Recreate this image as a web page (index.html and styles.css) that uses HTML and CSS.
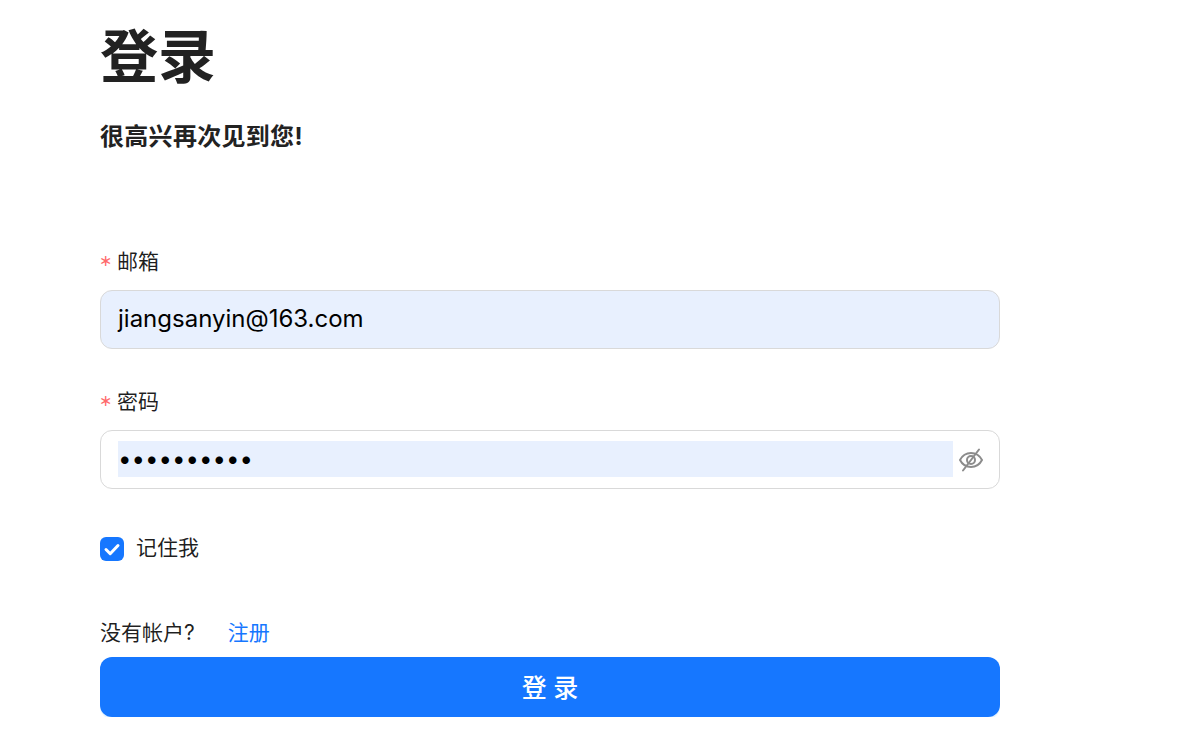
FILE: index.html
```html
<!DOCTYPE html>
<html lang="zh-CN">
<head>
<meta charset="utf-8">
<title>登录</title>
<link rel="stylesheet" href="styles.css">
</head>
<body>
<main class="page">
  <h1 class="title">登录</h1>
  <p class="subtitle">很高兴再次见到您!</p>
  <form class="form">
    <div class="field first">
      <label class="label"><span class="req">∗</span>邮箱</label>
      <div class="input filled"><span class="value">jiangsanyin@163.com</span></div>
    </div>
    <div class="field">
      <label class="label"><span class="req">∗</span>密码</label>
      <div class="input">
        <span class="pw">••••••••••</span>
        <svg class="eye" viewBox="0 0 24 24" width="24" height="24" fill="none" stroke="#8c8c8c" stroke-width="2" stroke-linecap="round" stroke-linejoin="round">
          <path d="M1 12C3.500 7.200 7.300 5 12 5s8.500 2.200 11 7c-2.500 4.800-6.300 7-11 7S3.500 16.800 1 12Z"/>
          <circle cx="12" cy="12" r="4"/>
          <path d="M20 1.500 4 22.500"/>
        </svg>
      </div>
    </div>
    <div class="remember">
      <span class="box"><svg viewBox="0 0 24 24" width="24" height="24" fill="none" stroke="#fff" stroke-width="3" stroke-linecap="round" stroke-linejoin="round"><path d="M6 12.500l4.200 4.200L18 8.500"/></svg></span>
      <span class="remember-text">记住我</span>
    </div>
    <div class="signup"><span>没有帐户?</span><a class="link">注册</a></div>
    <button class="submit" type="button">登 录</button>
  </form>
</main>
</body>
</html>
```
FILE: styles.css
```css
* { box-sizing: border-box; }
html, body { margin: 0; background: #fff; }
body {
  font-family: Inter, "Noto Sans CJK SC", sans-serif;
  color: rgba(0, 0, 0, 0.88);
  overflow: hidden;
}
.page { width: 900px; margin-left: 100px; }
.title {
  margin: 0;
  font-size: 58px;
  line-height: 60px;
  padding-top: 27px;
  font-weight: 700;
  height: 87px;
  color: #222;
}
.subtitle {
  margin: 34px 0 0;
  font-size: 24px;
  line-height: 32px;
  font-weight: 700;
  letter-spacing: 0.3px;
  color: #222;
  height: 32px;
}
.form { margin-top: 92px; }
.field { margin-bottom: 45px; }
.field.first { margin-bottom: 36px; }
.label { display: flex; align-items: center; height: 30px; font-size: 21px; margin-bottom: 15px; }
.req { color: #ff6b6d; width: 18px; margin-left: -1px; font-size: 16px; font-family: "DejaVu Sans", sans-serif; }
.input {
  height: 59px;
  border: 1px solid #d9d9d9;
  border-radius: 12px;
  padding: 0 16px 0 17px;
  display: flex;
  align-items: center;
  gap: 6px;
  font-size: 24px;
}
.input.filled { background: #e8f0fe; }
.value { color: #000; padding-bottom: 2px; }
.pw {
  flex: 1;
  height: 36px;
  line-height: 36px;
  margin-bottom: 2px;
  background: #e8f0fe;
  color: #000;
}
.eye { flex: none; }
.remember { display: flex; align-items: center; gap: 12px; font-size: 21px; height: 30px; }
.remember-text { margin-bottom: 6px; }
.box {
  width: 24px; height: 24px;
  border-radius: 6px;
  background: #1677ff;
  display: block;
}
.box svg { display: block; }
.signup { display: flex; align-items: center; gap: 33px; font-size: 21px; height: 30px; margin-top: 52px; }
.link { color: #1677ff; }
.submit {
  display: block;
  width: 100%;
  height: 60px;
  margin-top: 11px;
  border: 0;
  border-radius: 12px;
  background: #1677ff;
  color: #fff;
  font: inherit;
  font-size: 25px;
  font-weight: 500;
  padding: 0 0 3px;
  box-shadow: 0 2px 0 rgba(5, 145, 255, 0.1);
}
```
